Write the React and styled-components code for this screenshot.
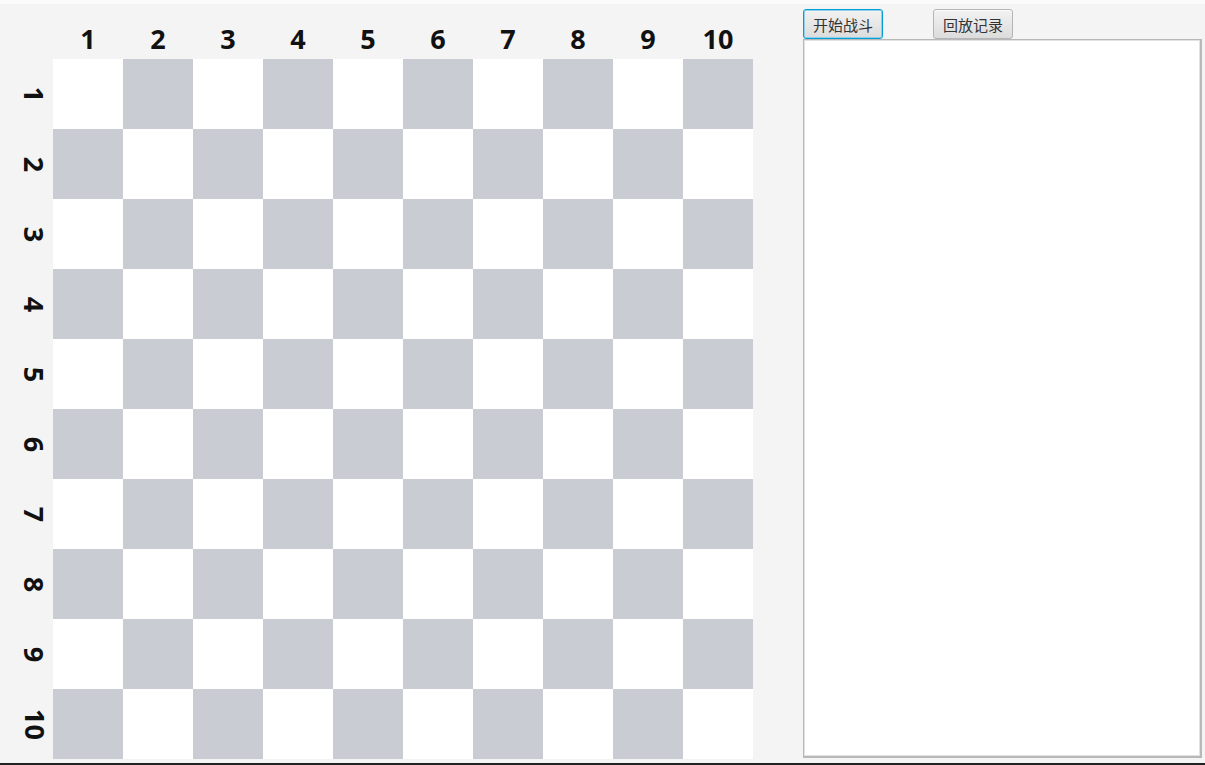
import React from "react";
import styled, { createGlobalStyle } from "styled-components";

const GlobalStyle = createGlobalStyle`
  html, body {
    margin: 0;
    padding: 0;
    background: #f4f4f4;
  }
  body {
    font-family: "Open Sans", "Noto Sans", sans-serif;
  }
`;

const SIZE = 10;
const nums = Array.from({ length: SIZE }, (_, i) => i + 1);

const App = () => {
    return (
        <>
            <GlobalStyle />
            <Page>
                <Main>
                    <Board>
                        <Corner />
                        {nums.map((n) => (
                            <ColHead key={"c" + n}>{n}</ColHead>
                        ))}
                        {nums.map((r) => (
                            <React.Fragment key={"r" + r}>
                                <RowHead>
                                    <Rotated>{r}</Rotated>
                                </RowHead>
                                {nums.map((c) => (
                                    <Cell key={c} $dark={(r + c) % 2 === 1} />
                                ))}
                            </React.Fragment>
                        ))}
                    </Board>

                    <Side>
                        <Toolbar>
                            <Button $focused>开始战斗</Button>
                            <Button>回放记录</Button>
                        </Toolbar>
                        <LogArea />
                    </Side>
                </Main>
            </Page>
        </>
    );
};

export default App;

const Page = styled.div`
width: 1205px;
height: 765px;
box-sizing: border-box;
border-top: 4px solid #fbfbfb;
border-bottom: 2px solid #222;
background: #f4f4f4;
overflow: hidden;
`;

const Main = styled.div`
display: flex;
align-items: flex-start;
`;

const Board = styled.div`
display: grid;
grid-template-columns: 53px repeat(10, 70px);
grid-template-rows: 55px repeat(10, 70px);
`;

const Corner = styled.div``;

const ColHead = styled.div`
display: flex;
justify-content: center;
align-items: flex-start;
padding-top: 21px;
font-size: 27px;
font-weight: 700;
line-height: 1;
color: #111;
`;

const RowHead = styled.div`
display: flex;
align-items: center;
justify-content: center;
padding-left: 17px;
`;

const Rotated = styled.div`
transform: rotate(90deg);
font-size: 27px;
font-weight: 700;
line-height: 1;
color: #111;
white-space: nowrap;
`;

const Cell = styled.div`
background: ${(p) => (p.$dark ? "#c9ccd3" : "#ffffff")};
`;

const Side = styled.div`
margin-left: 50px;
width: 400px;
padding-top: 5px;
display: flex;
flex-direction: column;
`;

const Toolbar = styled.div`
display: flex;
gap: 50px;
height: 30px;
`;

const Button = styled.button`
width: 80px;
height: 30px;
box-sizing: border-box;
padding: 0;
border-radius: 3px;
border: 1px solid ${(p) => (p.$focused ? "#039ed3" : "#b5b5b5")};
box-shadow: ${(p) => (p.$focused ? "inset 0 0 0 1px #8fd0ea" : "inset 0 1px 0 #fbfbfb")};
background: linear-gradient(#f2f2f2, #dcdcdc);
font-family: "Noto Sans CJK SC", "Microsoft YaHei", sans-serif;
font-size: 15px;
color: #333;
`;

const LogArea = styled.div`
height: 719px;
width: 399px;
box-sizing: border-box;
border: 1px solid #b8b8b8;
border-right-width: 2px;
border-bottom-width: 2px;
box-shadow: inset 0 0 0 1px #e2e2e2;
background: #fff;
`;
